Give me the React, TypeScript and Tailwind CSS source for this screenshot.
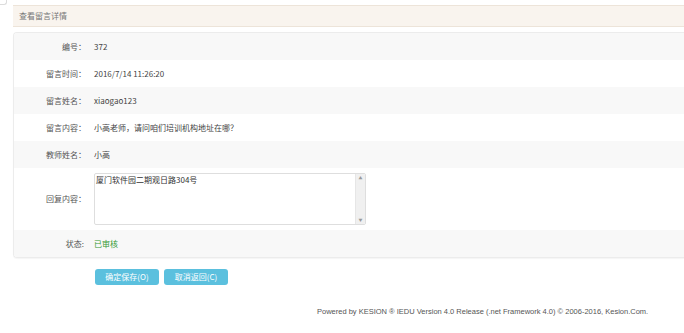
import React from 'react';

const rows = [
  { label: '编号：', value: '372' },
  { label: '留言时间：', value: '2016/7/14 11:26:20' },
  { label: '留言姓名：', value: 'xiaogao123' },
  { label: '留言内容：', value: '小高老师，请问咱们培训机构地址在哪？' },
  { label: '教师姓名：', value: '小高' },
];

function Row({ label, gray, children }: { label: string; gray?: boolean; children: React.ReactNode }) {
  return (
    <div className={`flex items-center h-[27px] ${gray ? 'bg-[#f8f8f8]' : 'bg-white'}`}>
      <div className="w-[72px] text-right text-[#555]">{label}</div>
      <div className="pl-[8px] text-[#444]">{children}</div>
    </div>
  );
}

export default function App() {
  return (
    <div className="w-[684px] h-[333px] bg-white overflow-hidden text-[8px] leading-none font-['Noto_Sans_CJK_SC','Liberation_Sans',sans-serif]">
      {/* frame corner */}
      <div className="h-[5px] w-[7px] border-r border-b border-[#dcdcdc] rounded-br-[3px]" />

      {/* title bar */}
      <div className="ml-[13px] h-[22px] flex items-center pl-[6px] bg-[#f9f4ee] border-y border-[#ede4d9] text-[#777]">
        查看留言详情
      </div>

      {/* detail panel */}
      <div className="ml-[13px] mt-[5px] border-t border-l border-b border-[#ececec] rounded-l-[4px] overflow-hidden shadow-[0_1px_1px_rgba(0,0,0,0.04)]">
        {rows.map((r, i) => (
          <Row key={r.label} label={r.label} gray={i % 2 === 0}>
            {r.value}
          </Row>
        ))}

        <div className="flex items-center h-[62px] bg-white">
          <div className="w-[72px] text-right text-[#555]">回复内容：</div>
          <div className="ml-[8px] w-[272px] h-[52px] flex border border-[#dedede] rounded-[2px] overflow-hidden">
            <div className="flex-1 pl-[1px] pt-[2px] text-[#333]">厦门软件园二期观日路304号</div>
            <div className="w-[10px] bg-[#f0f0f0] border-l border-[#e6e6e6] flex flex-col justify-between items-center py-[2px]">
              <span className="text-[4px] text-[#999]">▲</span>
              <span className="text-[4px] text-[#999]">▼</span>
            </div>
          </div>
        </div>

        <div className="flex items-center h-[27px] bg-[#f8f8f8]">
          <div className="w-[72px] text-right text-[#555] pr-[2px]">状态:</div>
          <div className="pl-[8px] text-[#339933]">已审核</div>
        </div>
      </div>

      {/* actions */}
      <div className="mt-[11px] pl-[95px] flex gap-[5px]">
        <button className="w-[64px] h-[16px] rounded-[3px] bg-[#5bc0de] text-white text-[8px]">确定保存(O)</button>
        <button className="w-[64px] h-[16px] rounded-[3px] bg-[#5bc0de] text-white text-[8px]">取消返回(C)</button>
      </div>

      {/* footer */}
      <div className="mt-[23px] pl-[317px] text-[7.5px] text-[#555] font-['Liberation_Sans',sans-serif] whitespace-nowrap">
        Powered by KESION ® IEDU Version 4.0 Release (.net Framework 4.0) © 2006-2016, Kesion.Com.
      </div>
    </div>
  );
}
